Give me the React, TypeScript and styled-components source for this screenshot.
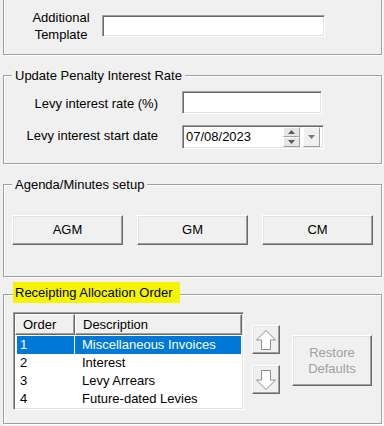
import React from 'react';
import styled, { createGlobalStyle } from 'styled-components';

const GlobalStyle = createGlobalStyle`
  html, body { margin: 0; padding: 0; background: #f0f0f0; }
  body {
    width: 384px; height: 426px; overflow: hidden;
    font-family: "Liberation Sans", Arial, sans-serif;
    font-size: 13px; color: #000;
  }
  * { box-sizing: border-box; }
`;

const Page = styled.div`
  display: flex;
  flex-direction: column;
  padding: 0 2px 0 3px;
`;

const TopGroup = styled.div`
  height: 55px;
  border: 1px solid #a0a0a0;
  border-top: none;
  box-shadow: 1px 1px 0 #fff, inset 1px 0 0 #fff;
  padding: 9px 0 0 24px;
  display: flex;
  align-items: flex-start;
`;

const TopRow = styled.div`
  display: flex;
  align-items: center;
  height: 34px;
`;

const StackLabel = styled.div`
  width: 66px;
  margin-right: 8px;
  text-align: center;
  line-height: 17px;
`;

const Group = styled.fieldset<{ $mt: number }>`
  margin: ${(p) => p.$mt}px 0 0 0;
  padding: 0;
  min-width: 0;
  border: 1px solid #a0a0a0;
  box-shadow: 1px 1px 0 #fff, inset 1px 1px 0 #fff;
`;

const Legend = styled.legend<{ $ml?: number }>`
  margin-left: ${(p) => p.$ml ?? 8}px;
  padding: 0 3px;
  line-height: 15px;
  background: #f0f0f0;
`;

const HighlightLegend = styled.legend`
  margin-left: 9px;
  padding: 0 0 4px 0;
  line-height: 15px;
  background: #f0f0f0;
`;

const Highlight = styled.span`
  display: inline-block;
  height: 21px;
  padding: 3px 7px 3px 2px;
  background: #f4f400;
`;

const FieldRows = styled.div`
  display: flex;
  flex-direction: column;
  gap: 11px;
  padding: 8px 0 14px 0;
`;

const FieldRow = styled.div`
  display: flex;
  align-items: center;
`;

const FieldLabel = styled.span<{ $dy?: number }>`
  width: 154px;
  margin-right: 24px;
  text-align: right;
  position: relative;
  top: ${(p) => p.$dy ?? 0}px;
`;

const TextInput = styled.input<{ $w: number; $h: number }>`
  width: ${(p) => p.$w}px;
  height: ${(p) => p.$h}px;
  margin: 0;
  padding: 0 3px;
  font: inherit;
  background: #fff;
  border: 1px solid;
  border-color: #a0a0a0 #fff #fff #a0a0a0;
  box-shadow: inset 1px 1px 0 #696969, inset -1px -1px 0 #e3e3e3;
  outline: none;
`;

const DateBox = styled.div`
  width: 142px;
  height: 24px;
  display: flex;
  align-items: center;
  padding: 2px 3px 2px 3px;
  background: #fff;
  border: 1px solid;
  border-color: #a0a0a0 #fff #fff #a0a0a0;
  box-shadow: inset 1px 1px 0 #696969, inset -1px -1px 0 #e3e3e3;
`;

const DateText = styled.span`
  flex: 1;
  line-height: 20px;
`;

const Spin = styled.div`
  width: 17px;
  height: 20px;
  display: flex;
  flex-direction: column;
  margin-right: 3px;
`;

const SpinHalf = styled.div`
  flex: 1;
  display: flex;
  align-items: center;
  justify-content: center;
  background: #e6e6e6;
  border: 1px solid;
  border-color: #fff #a0a0a0 #a0a0a0 #fff;
`;

const DropButton = styled.div`
  width: 17px;
  height: 20px;
  display: flex;
  align-items: center;
  justify-content: center;
  background: #f0f0f0;
  border: 1px solid;
  border-color: #fff #a0a0a0 #a0a0a0 #fff;
`;

const ButtonRow = styled.div`
  display: flex;
  justify-content: space-between;
  padding: 23px 8px 31px 8px;
`;

const WinButton = styled.button<{ $w: number; $h: number; $disabled?: boolean }>`
  width: ${(p) => p.$w}px;
  height: ${(p) => p.$h}px;
  margin: 0;
  padding: 0;
  font: inherit;
  line-height: 16px;
  color: ${(p) => (p.$disabled ? '#a0a0a0' : '#000')};
  background: #f0f0f0;
  border: 1px solid;
  border-color: #fff #696969 #696969 #fff;
  box-shadow: inset -1px -1px 0 #a0a0a0, inset 1px 1px 0 #e3e3e3;
  display: flex;
  align-items: center;
  justify-content: center;
  text-align: center;
`;

const OrderArea = styled.div`
  display: flex;
  align-items: flex-start;
  padding: 5px 0 13px 9px;
`;

const ListBox = styled.div`
  width: 231px;
  height: 98px;
  background: #fff;
  border: 1px solid;
  border-color: #a0a0a0 #fff #fff #a0a0a0;
  box-shadow: inset 1px 1px 0 #696969, inset -1px -1px 0 #e3e3e3;
  padding: 1px;
  display: flex;
  flex-direction: column;
`;

const Header = styled.div`
  display: flex;
  height: 21px;
  flex-shrink: 0;
`;

const HeaderCell = styled.div<{ $w?: number }>`
  ${(p) => (p.$w ? `width: ${p.$w}px;` : 'flex: 1;')}
  padding-left: 7px;
  line-height: 19px;
  background: #f0f0f0;
  border: 1px solid;
  border-color: #fff #696969 #696969 #fff;
  box-shadow: inset -1px -1px 0 #a0a0a0;
`;

const Rows = styled.div`
  display: flex;
  flex-direction: column;
  padding: 1px 1px 0 2px;
`;

const Row = styled.div`
  display: flex;
  height: 18px;
  line-height: 18px;
`;

const Cell = styled.div<{ $w?: number; $sel?: boolean; $pl: number }>`
  ${(p) => (p.$w ? `width: ${p.$w}px; margin-right: 1px;` : 'flex: 1;')}
  padding-left: ${(p) => p.$pl}px;
  background: ${(p) => (p.$sel ? '#0078d7' : 'transparent')};
  color: ${(p) => (p.$sel ? '#fff' : '#000')};
  white-space: nowrap;
`;

const ArrowCol = styled.div`
  display: flex;
  flex-direction: column;
  gap: 11px;
  padding-top: 13px;
  margin-left: 8px;
`;

const RestoreWrap = styled.div`
  margin: 23px 0 0 12px;
`;

const ArrowIcon = ({ down }: { down?: boolean }) => (
  <svg width="22" height="22" viewBox="0 0 22 22" style={{ transform: down ? 'rotate(180deg)' : undefined }}>
    <polygon
      points="11,1.5 20.5,11 15.5,11 15.5,20.5 6.5,20.5 6.5,11 1.5,11"
      fill="#fff"
      stroke="#8c8c8c"
      strokeWidth="1"
    />
  </svg>
);

const Tri = ({ down, color, w, h }: { down?: boolean; color: string; w: number; h: number }) => (
  <svg width={w} height={h} viewBox={`0 0 ${w} ${h}`}>
    <polygon
      points={down ? `0,0 ${w},0 ${w / 2},${h}` : `0,${h} ${w},${h} ${w / 2},0`}
      fill={color}
    />
  </svg>
);

const rows = [
  ['1', 'Miscellaneous Invoices'],
  ['2', 'Interest'],
  ['3', 'Levy Arrears'],
  ['4', 'Future-dated Levies'],
];

export default function App() {
  return (
    <>
      <GlobalStyle />
      <Page>
        <TopGroup>
          <TopRow>
            <StackLabel>
              Additional
              <br />
              Template
            </StackLabel>
            <TextInput $w={223} $h={22} />
          </TopRow>
        </TopGroup>

        <Group $mt={13}>
          <Legend>Update Penalty Interest Rate</Legend>
          <FieldRows>
            <FieldRow>
              <FieldLabel $dy={1}>Levy interest rate (%)</FieldLabel>
              <TextInput $w={140} $h={23} />
            </FieldRow>
            <FieldRow>
              <FieldLabel $dy={-2}>Levy interest start date</FieldLabel>
              <DateBox>
                <DateText>07/08/2023</DateText>
                <Spin>
                  <SpinHalf>
                    <Tri color="#5a5a5a" w={7} h={4} />
                  </SpinHalf>
                  <SpinHalf>
                    <Tri down color="#5a5a5a" w={7} h={4} />
                  </SpinHalf>
                </Spin>
                <DropButton>
                  <Tri down color="#7a7a7a" w={7} h={4} />
                </DropButton>
              </DateBox>
            </FieldRow>
          </FieldRows>
        </Group>

        <Group $mt={13}>
          <Legend>Agenda/Minutes setup</Legend>
          <ButtonRow>
            <WinButton $w={111} $h={30}>AGM</WinButton>
            <WinButton $w={111} $h={30}>GM</WinButton>
            <WinButton $w={111} $h={30}>CM</WinButton>
          </ButtonRow>
        </Group>

        <Group $mt={5}>
          <HighlightLegend>
            <Highlight>Receipting Allocation Order</Highlight>
          </HighlightLegend>
          <OrderArea>
            <ListBox>
              <Header>
                <HeaderCell $w={60}>Order</HeaderCell>
                <HeaderCell>Description</HeaderCell>
              </Header>
              <Rows>
                {rows.map(([n, d], i) => (
                  <Row key={n}>
                    <Cell $w={57} $pl={3} $sel={i === 0}>
                      {n}
                    </Cell>
                    <Cell $pl={7} $sel={i === 0}>
                      {d}
                    </Cell>
                  </Row>
                ))}
              </Rows>
            </ListBox>
            <ArrowCol>
              <WinButton $w={28} $h={29}>
                <ArrowIcon />
              </WinButton>
              <WinButton $w={28} $h={29}>
                <ArrowIcon down />
              </WinButton>
            </ArrowCol>
            <RestoreWrap>
              <WinButton $w={80} $h={51} $disabled>
                Restore
                <br />
                Defaults
              </WinButton>
            </RestoreWrap>
          </OrderArea>
        </Group>
      </Page>
    </>
  );
}
